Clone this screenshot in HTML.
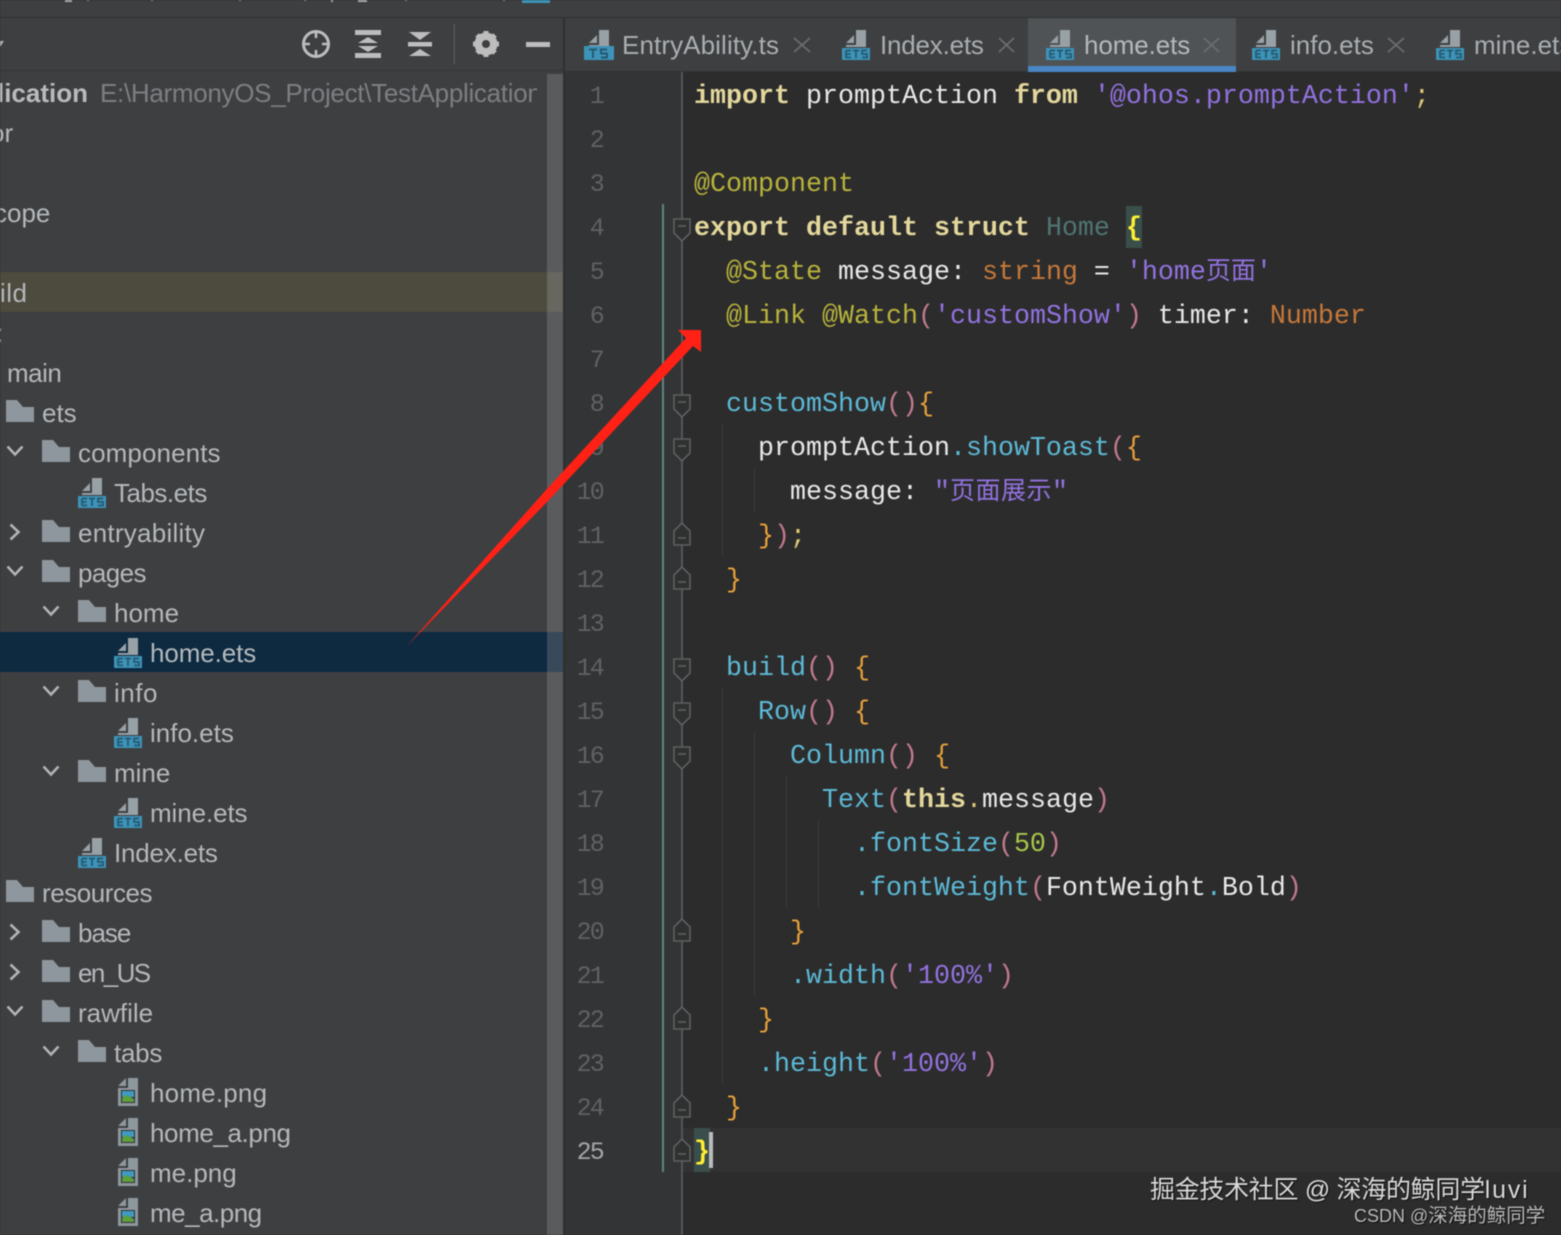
<!DOCTYPE html>
<html><head><meta charset="utf-8"><style>
html,body{margin:0;padding:0;background:#2c2c2c}
#p{position:relative;width:1561px;height:1235px;overflow:hidden;background:#2c2c2c;filter:blur(.4px)}
.a{position:absolute}
.t{position:absolute;height:40px;line-height:40px;font:26px/40px "Liberation Sans","Noto Sans CJK SC",sans-serif;color:#b4b8ba;white-space:pre}
.tab{position:absolute;top:18px;height:54px;line-height:54px;font-size:26px;font-family:"Liberation Sans",sans-serif;color:#a9aeb1;white-space:pre}
.l{position:absolute;left:694px;height:44px;line-height:44px;font:26.67px/44px "Liberation Mono","Noto Sans CJK SC",monospace;color:#e8e8e8;white-space:pre}
.n{position:absolute;left:559px;width:44px;height:44px;text-align:right;font:25px/44px "Liberation Mono",monospace;letter-spacing:-1.8px;color:#5f6264}
.k{color:#e3d79c;font-weight:bold}.an{color:#b8b33c}.s{color:#9272df}.o{color:#c5783a}.c{color:#5cb9d6}.p{color:#c07a8d}.b{color:#e8a03a}.g{color:#a8c748}
.z{font-size:25px}
svg{position:absolute;overflow:visible}
</style></head><body><div id="p">
<svg width="0" height="0" style="left:0;top:0"><defs>
<symbol id="ets" viewBox="0 0 28 30"><path d="M4 13H12V5Z M14 0H24V17H4V15H14Z" fill="#98a1a6"/><rect y="18" width="28" height="12" fill="#3d93b8"/><path d="M4 20.5H9M4 24H8.5M4 27.5H9M4 20.5V27.5M11 20.5H17M14 20.5V28M25 20.5H20V24H25V27.5H20" fill="none" stroke="#265a72" stroke-width="1.8"/></symbol>
<symbol id="ts" viewBox="0 0 30 30"><path d="M5 13H13V5Z M15 0H25V17H5V15H15Z" fill="#98a1a6"/><rect y="16" width="30" height="14" fill="#3d93b8"/><path d="M5 19.5H13M9 19.5V28M23 19.5H17V23.5H23V27.5H17" fill="none" stroke="#265a72" stroke-width="2"/></symbol>
<symbol id="f" viewBox="0 0 28 22"><path d="M0 0H11L17 7H28V22H0Z" fill="#8e979d"/></symbol>
<symbol id="dn" viewBox="0 0 18 12"><path d="M1.5 1.5L9 9.5L16.5 1.5" fill="none" stroke="#b0b4b6" stroke-width="2.6"/></symbol>
<symbol id="rt" viewBox="0 0 12 18"><path d="M1.5 1.5L9.5 9L1.5 16.5" fill="none" stroke="#b0b4b6" stroke-width="2.6"/></symbol>
<symbol id="img" viewBox="0 0 20 28"><path d="M0 8L8 0V8Z M10 0H20V28H0V10H10Z" fill="#8e979d"/><rect x="3" y="12" width="14" height="13" fill="#2f3335"/><rect x="4" y="13" width="12" height="6" fill="#3f9ac4"/><path d="M4 24V20L9 17L16 21V24Z" fill="#5f9e3c"/></symbol>
<symbol id="fd" viewBox="0 0 18 24"><path d="M1 1H17V15L9 23L1 15Z" fill="#2f3030" stroke="#5e5f60" stroke-width="1.6"/><path d="M5 8H13" stroke="#5e5f60" stroke-width="1.6"/></symbol>
<symbol id="fu" viewBox="0 0 18 24"><path d="M1 23H17V9L9 1L1 9Z" fill="#2f3030" stroke="#5e5f60" stroke-width="1.6"/><path d="M5 16H13" stroke="#5e5f60" stroke-width="1.6"/></symbol>
</defs></svg>

<!-- top strip -->
<div class="a" style="left:0;top:0;width:1561px;height:17px;background:#3e3f41"></div>
<div class="a" style="left:0;top:17px;width:1561px;height:1px;background:#303132"></div>
<div class="a" style="left:522px;top:0;width:28px;height:3px;background:#3d93b8"></div>
<div class="a" style="left:65px;top:0;width:7px;height:2px;background:#aaa"></div>
<div class="a" style="left:331px;top:0;width:2px;height:2px;background:#aaa"></div>
<div class="a" style="left:358px;top:0;width:9px;height:2px;background:#aaa"></div>
<div class="a" style="left:87px;top:0;width:2px;height:1px;background:#888"></div>
<div class="a" style="left:151px;top:0;width:2px;height:1px;background:#888"></div>
<div class="a" style="left:239px;top:0;width:2px;height:1px;background:#888"></div>
<div class="a" style="left:304px;top:0;width:2px;height:1px;background:#888"></div>
<div class="a" style="left:405px;top:0;width:2px;height:1px;background:#888"></div>
<div class="a" style="left:503px;top:0;width:2px;height:1px;background:#888"></div>

<!-- left panel -->
<div class="a" style="left:0;top:18px;width:565px;height:1217px;background:#3e3f41"></div>
<div class="a" style="left:0;top:70px;width:565px;height:1px;background:#353637"></div>
<div class="a" style="left:0;top:272px;width:547px;height:40px;background:#4d4a3e"></div>
<div class="a" style="left:0;top:632px;width:547px;height:40px;background:#0d2a41"></div>
<div class="a" style="left:547px;top:74px;width:16px;height:1161px;background:#5a5b5d"></div>
<div class="a" style="left:547px;top:272px;width:16px;height:40px;background:#67665f"></div>
<div class="a" style="left:547px;top:632px;width:16px;height:40px;background:#37495b"></div>
<div class="a" style="left:563px;top:18px;width:2px;height:1217px;background:#2f3031"></div>

<svg style="left:0;top:0" width="565" height="72">
<path d="M-3 41H4L0 47Z" fill="#b0b4b6"/>
<circle cx="316" cy="44" r="12.5" fill="none" stroke="#bdbdbd" stroke-width="3"/>
<path d="M316 31V38M316 50V57M303 44H310M322 44H329" stroke="#bdbdbd" stroke-width="2.6"/>
<path d="M355 30H381V35H355ZM355 53H381V58H355Z" fill="#bdbdbd"/>
<path d="M368 37L378 43H358ZM368 52L358 46H378Z" fill="#bdbdbd"/>
<path d="M408 42H432V46.5H408Z" fill="#bdbdbd"/>
<path d="M409 32H431L420 40ZM420 49L431 56H409Z" fill="#bdbdbd"/>
<rect x="453.5" y="24" width="1.6" height="40" fill="#555658"/>
<circle cx="486" cy="44" r="8.5" fill="none" stroke="#bdbdbd" stroke-width="6"/>
<path d="M486 31V57M473 44H499M477 35L495 53M495 35L477 53" stroke="#bdbdbd" stroke-width="5"/>
<circle cx="486" cy="44" r="4" fill="#3e3f41"/>
<rect x="526" y="42" width="24" height="5" fill="#bdbdbd"/>
</svg>

<!-- tree text -->
<div class="t" style="top:73px;width:100px;overflow:hidden;text-align:right;font-weight:bold;left:-12px;color:#b8bbbd">lication</div>
<div class="t" style="left:100px;top:73px;width:437px;overflow:hidden;color:#7c7f82;letter-spacing:-.3px">E:\HarmonyOS_Project\TestApplication</div>
<div class="t" style="left:-10px;top:113px">or</div>
<div class="t" style="left:-6px;top:193px">cope</div>
<div class="t" style="left:0;top:273px;letter-spacing:.5px">ild</div>
<div class="t" style="left:-4px;top:313px">:</div>
<div class="t" style="left:7px;top:353px;letter-spacing:-.5px">main</div>
<div class="t" style="left:42px;top:393px">ets</div>
<div class="t" style="left:78px;top:433px;letter-spacing:.1px">components</div>
<div class="t" style="left:114px;top:473px;letter-spacing:-.5px">Tabs.ets</div>
<div class="t" style="left:78px;top:513px;letter-spacing:.25px">entryability</div>
<div class="t" style="left:78px;top:553px;letter-spacing:-.6px">pages</div>
<div class="t" style="left:114px;top:593px">home</div>
<div class="t" style="left:150px;top:633px;letter-spacing:-.1px">home.ets</div>
<div class="t" style="left:114px;top:673px;letter-spacing:.5px">info</div>
<div class="t" style="left:150px;top:713px">info.ets</div>
<div class="t" style="left:114px;top:753px">mine</div>
<div class="t" style="left:150px;top:793px;letter-spacing:-.1px">mine.ets</div>
<div class="t" style="left:114px;top:833px;letter-spacing:-.2px">Index.ets</div>
<div class="t" style="left:42px;top:873px;letter-spacing:-.45px">resources</div>
<div class="t" style="left:78px;top:913px;letter-spacing:-1px">base</div>
<div class="t" style="left:78px;top:953px;letter-spacing:-1.6px">en_US</div>
<div class="t" style="left:78px;top:993px">rawfile</div>
<div class="t" style="left:114px;top:1033px;letter-spacing:-.25px">tabs</div>
<div class="t" style="left:150px;top:1073px;letter-spacing:.2px">home.png</div>
<div class="t" style="left:150px;top:1113px;letter-spacing:-.4px">home_a.png</div>
<div class="t" style="left:150px;top:1153px">me.png</div>
<div class="t" style="left:150px;top:1193px;letter-spacing:-.5px">me_a.png</div>

<!-- tree icons -->
<svg style="left:0;top:0" width="565" height="1235">
<use href="#f" x="6" y="400" width="28" height="22"/>
<use href="#dn" x="6" y="445" width="18" height="12"/>
<use href="#f" x="42" y="440" width="28" height="22"/>
<use href="#ets" x="78" y="478" width="28" height="30"/>
<use href="#rt" x="9" y="523" width="12" height="18"/>
<use href="#f" x="42" y="520" width="28" height="22"/>
<use href="#dn" x="6" y="565" width="18" height="12"/>
<use href="#f" x="42" y="560" width="28" height="22"/>
<use href="#dn" x="42" y="605" width="18" height="12"/>
<use href="#f" x="78" y="600" width="28" height="22"/>
<use href="#ets" x="114" y="638" width="28" height="30"/>
<use href="#dn" x="42" y="685" width="18" height="12"/>
<use href="#f" x="78" y="680" width="28" height="22"/>
<use href="#ets" x="114" y="718" width="28" height="30"/>
<use href="#dn" x="42" y="765" width="18" height="12"/>
<use href="#f" x="78" y="760" width="28" height="22"/>
<use href="#ets" x="114" y="798" width="28" height="30"/>
<use href="#ets" x="78" y="838" width="28" height="30"/>
<use href="#f" x="6" y="880" width="28" height="22"/>
<use href="#rt" x="9" y="923" width="12" height="18"/>
<use href="#f" x="42" y="920" width="28" height="22"/>
<use href="#rt" x="9" y="963" width="12" height="18"/>
<use href="#f" x="42" y="960" width="28" height="22"/>
<use href="#dn" x="6" y="1005" width="18" height="12"/>
<use href="#f" x="42" y="1000" width="28" height="22"/>
<use href="#dn" x="42" y="1045" width="18" height="12"/>
<use href="#f" x="78" y="1040" width="28" height="22"/>
<use href="#img" x="118" y="1078" width="20" height="28"/>
<use href="#img" x="118" y="1118" width="20" height="28"/>
<use href="#img" x="118" y="1158" width="20" height="28"/>
<use href="#img" x="118" y="1198" width="20" height="28"/>
</svg>

<!-- tabs -->
<div class="a" style="left:565px;top:18px;width:996px;height:54px;background:#3e3f41"></div>
<div class="a" style="left:1028px;top:18px;width:208px;height:48px;background:#4f5355"></div>
<div class="a" style="left:1028px;top:66px;width:208px;height:6px;background:#4a86c5"></div>
<div class="a" style="left:565px;top:71px;width:463px;height:1px;background:#323334"></div>
<div class="a" style="left:1236px;top:71px;width:325px;height:1px;background:#323334"></div>
<svg style="left:0;top:0" width="1561" height="72">
<use href="#ts" x="584" y="30" width="30" height="30"/>
<use href="#ets" x="842" y="30" width="28" height="30"/>
<use href="#ets" x="1046" y="30" width="28" height="30"/>
<use href="#ets" x="1252" y="30" width="28" height="30"/>
<use href="#ets" x="1436" y="30" width="28" height="30"/>
<g stroke="#6a6d6f" stroke-width="1.8" fill="none">
<path d="M794 38L810 52M810 38L794 52"/>
<path d="M999 38L1014 52M1014 38L999 52"/>
<path d="M1204 38L1219 52M1219 38L1204 52"/>
<path d="M1388 38L1404 52M1404 38L1388 52"/>
</g>
</svg>
<div class="tab" style="left:622px;letter-spacing:.1px">EntryAbility.ts</div>
<div class="tab" style="left:880px;letter-spacing:-.2px">Index.ets</div>
<div class="tab" style="left:1084px;color:#b4b9bc;letter-spacing:-.1px">home.ets</div>
<div class="tab" style="left:1290px">info.ets</div>
<div class="tab" style="left:1474px">mine.ets</div>

<!-- gutter + editor -->
<div class="a" style="left:565px;top:72px;width:117px;height:1163px;background:#333435"></div>
<div class="a" style="left:682px;top:72px;width:879px;height:1163px;background:#2c2c2c"></div>
<div class="a" style="left:683px;top:1128px;width:878px;height:44px;background:#323232"></div>
<div class="a" style="left:681px;top:72px;width:2px;height:1163px;background:#555657"></div>
<div class="a" style="left:662px;top:204px;width:2px;height:968px;background:#5d8781"></div>
<div class="a" style="left:1126px;top:206px;width:16px;height:42px;background:#3a4f4b"></div>
<div class="a" style="left:694px;top:1128px;width:16px;height:44px;background:#3a4f4b"></div>
<!-- indent guides -->
<div class="a" style="left:722px;top:425px;width:1px;height:132px;background:#3c3c3c"></div>
<div class="a" style="left:754px;top:469px;width:1px;height:44px;background:#3c3c3c"></div>
<div class="a" style="left:722px;top:689px;width:1px;height:396px;background:#3c3c3c"></div>
<div class="a" style="left:754px;top:733px;width:1px;height:264px;background:#3c3c3c"></div>
<div class="a" style="left:786px;top:777px;width:1px;height:132px;background:#3c3c3c"></div>
<div class="a" style="left:818px;top:821px;width:1px;height:88px;background:#3c3c3c"></div>

<!-- line numbers -->
<div class="n" style="top:75px">1</div><div class="n" style="top:119px">2</div><div class="n" style="top:163px">3</div><div class="n" style="top:207px">4</div><div class="n" style="top:251px">5</div><div class="n" style="top:295px">6</div><div class="n" style="top:339px">7</div><div class="n" style="top:383px">8</div><div class="n" style="top:427px">9</div><div class="n" style="top:471px">10</div><div class="n" style="top:515px">11</div><div class="n" style="top:559px">12</div><div class="n" style="top:603px">13</div><div class="n" style="top:647px">14</div><div class="n" style="top:691px">15</div><div class="n" style="top:735px">16</div><div class="n" style="top:779px">17</div><div class="n" style="top:823px">18</div><div class="n" style="top:867px">19</div><div class="n" style="top:911px">20</div><div class="n" style="top:955px">21</div><div class="n" style="top:999px">22</div><div class="n" style="top:1043px">23</div><div class="n" style="top:1087px">24</div><div class="n" style="top:1131px;color:#a5a6a7">25</div>

<!-- fold markers -->
<svg style="left:0;top:0" width="1561" height="1235">
<use href="#fd" x="673" y="218" width="18" height="24"/>
<use href="#fd" x="673" y="394" width="18" height="24"/>
<use href="#fd" x="673" y="438" width="18" height="24"/>
<use href="#fu" x="673" y="522" width="18" height="24"/>
<use href="#fu" x="673" y="566" width="18" height="24"/>
<use href="#fd" x="673" y="658" width="18" height="24"/>
<use href="#fd" x="673" y="702" width="18" height="24"/>
<use href="#fd" x="673" y="746" width="18" height="24"/>
<use href="#fu" x="673" y="918" width="18" height="24"/>
<use href="#fu" x="673" y="1006" width="18" height="24"/>
<use href="#fu" x="673" y="1094" width="18" height="24"/>
<use href="#fu" x="673" y="1138" width="18" height="24"/>
</svg>

<!-- code -->
<div class="l" style="top:75px"><span class="k">import</span> promptAction <span class="k">from</span> <span class="s">'@ohos.promptAction'</span><span style="color:#dcc873">;</span></div>
<div class="l" style="top:163px"><span class="an">@Component</span></div>
<div class="l" style="top:207px"><span class="k">export default struct</span> <span style="color:#4f7572">Home</span> <span style="color:#ffee33;font-weight:bold">{</span></div>
<div class="l" style="top:251px">  <span class="an">@State</span> message: <span class="o">string</span> = <span class="s">'home<span class="z">页面</span>'</span></div>
<div class="l" style="top:295px">  <span class="an">@Link @Watch</span><span class="p">(</span><span class="s">'customShow'</span><span class="p">)</span> timer: <span class="o">Number</span></div>
<div class="l" style="top:383px">  <span class="c">customShow</span><span class="p">()</span><span class="b">{</span></div>
<div class="l" style="top:427px">    promptAction<span class="c">.showToast</span><span class="p">(</span><span class="b">{</span></div>
<div class="l" style="top:471px">      message: <span class="s">"<span class="z" style="letter-spacing:.5px">页面展示</span>"</span></div>
<div class="l" style="top:515px">    <span class="b">}</span><span class="p">)</span><span style="color:#dcc873">;</span></div>
<div class="l" style="top:559px">  <span class="b">}</span></div>
<div class="l" style="top:647px">  <span class="c">build</span><span class="p">()</span> <span class="b">{</span></div>
<div class="l" style="top:691px">    <span class="c">Row</span><span class="p">()</span> <span class="b">{</span></div>
<div class="l" style="top:735px">      <span class="c">Column</span><span class="p">()</span> <span class="b">{</span></div>
<div class="l" style="top:779px">        <span class="c">Text</span><span class="p">(</span><span class="k">this</span><span style="color:#dcc873">.</span>message<span class="p">)</span></div>
<div class="l" style="top:823px">          <span class="c">.fontSize</span><span class="p">(</span><span class="g">50</span><span class="p">)</span></div>
<div class="l" style="top:867px">          <span class="c">.fontWeight</span><span class="p">(</span>FontWeight<span class="c">.</span>Bold<span class="p">)</span></div>
<div class="l" style="top:911px">      <span class="b">}</span></div>
<div class="l" style="top:955px">      <span class="c">.width</span><span class="p">(</span><span class="s">'100%'</span><span class="p">)</span></div>
<div class="l" style="top:999px">    <span class="b">}</span></div>
<div class="l" style="top:1043px">    <span class="c">.height</span><span class="p">(</span><span class="s">'100%'</span><span class="p">)</span></div>
<div class="l" style="top:1087px">  <span class="b">}</span></div>
<div class="l" style="top:1131px"><span style="color:#ffee33;font-weight:bold">}</span></div>
<div class="a" style="left:709px;top:1132px;width:4px;height:36px;background:#bbbbbb"></div>

<!-- arrow -->
<svg style="left:0;top:0" width="1561" height="1235">
<path d="M406 647L546 490L686 338L678 330H701V352L693 346L547 502Z" fill="#ff2116"/>
</svg>

<!-- watermark -->
<div class="a" style="left:1150px;top:1173px;white-space:pre;font:25px/34px 'Liberation Sans','Noto Sans CJK SC',sans-serif;color:#d9d9d9;text-shadow:1px 1px 1px #111;letter-spacing:-.3px">掘金技术社区 @ 深海的鲸同学<span style="letter-spacing:1.8px">luvi</span></div>
<div class="a" style="left:1354px;top:1203px;white-space:pre;font:18px/26px 'Liberation Sans','Noto Sans CJK SC',sans-serif;color:#b9b9b9;text-shadow:1px 1px 1px #111">CSDN @<span style="font-size:19.5px">深海的鲸同学</span></div>
</div></body></html>
